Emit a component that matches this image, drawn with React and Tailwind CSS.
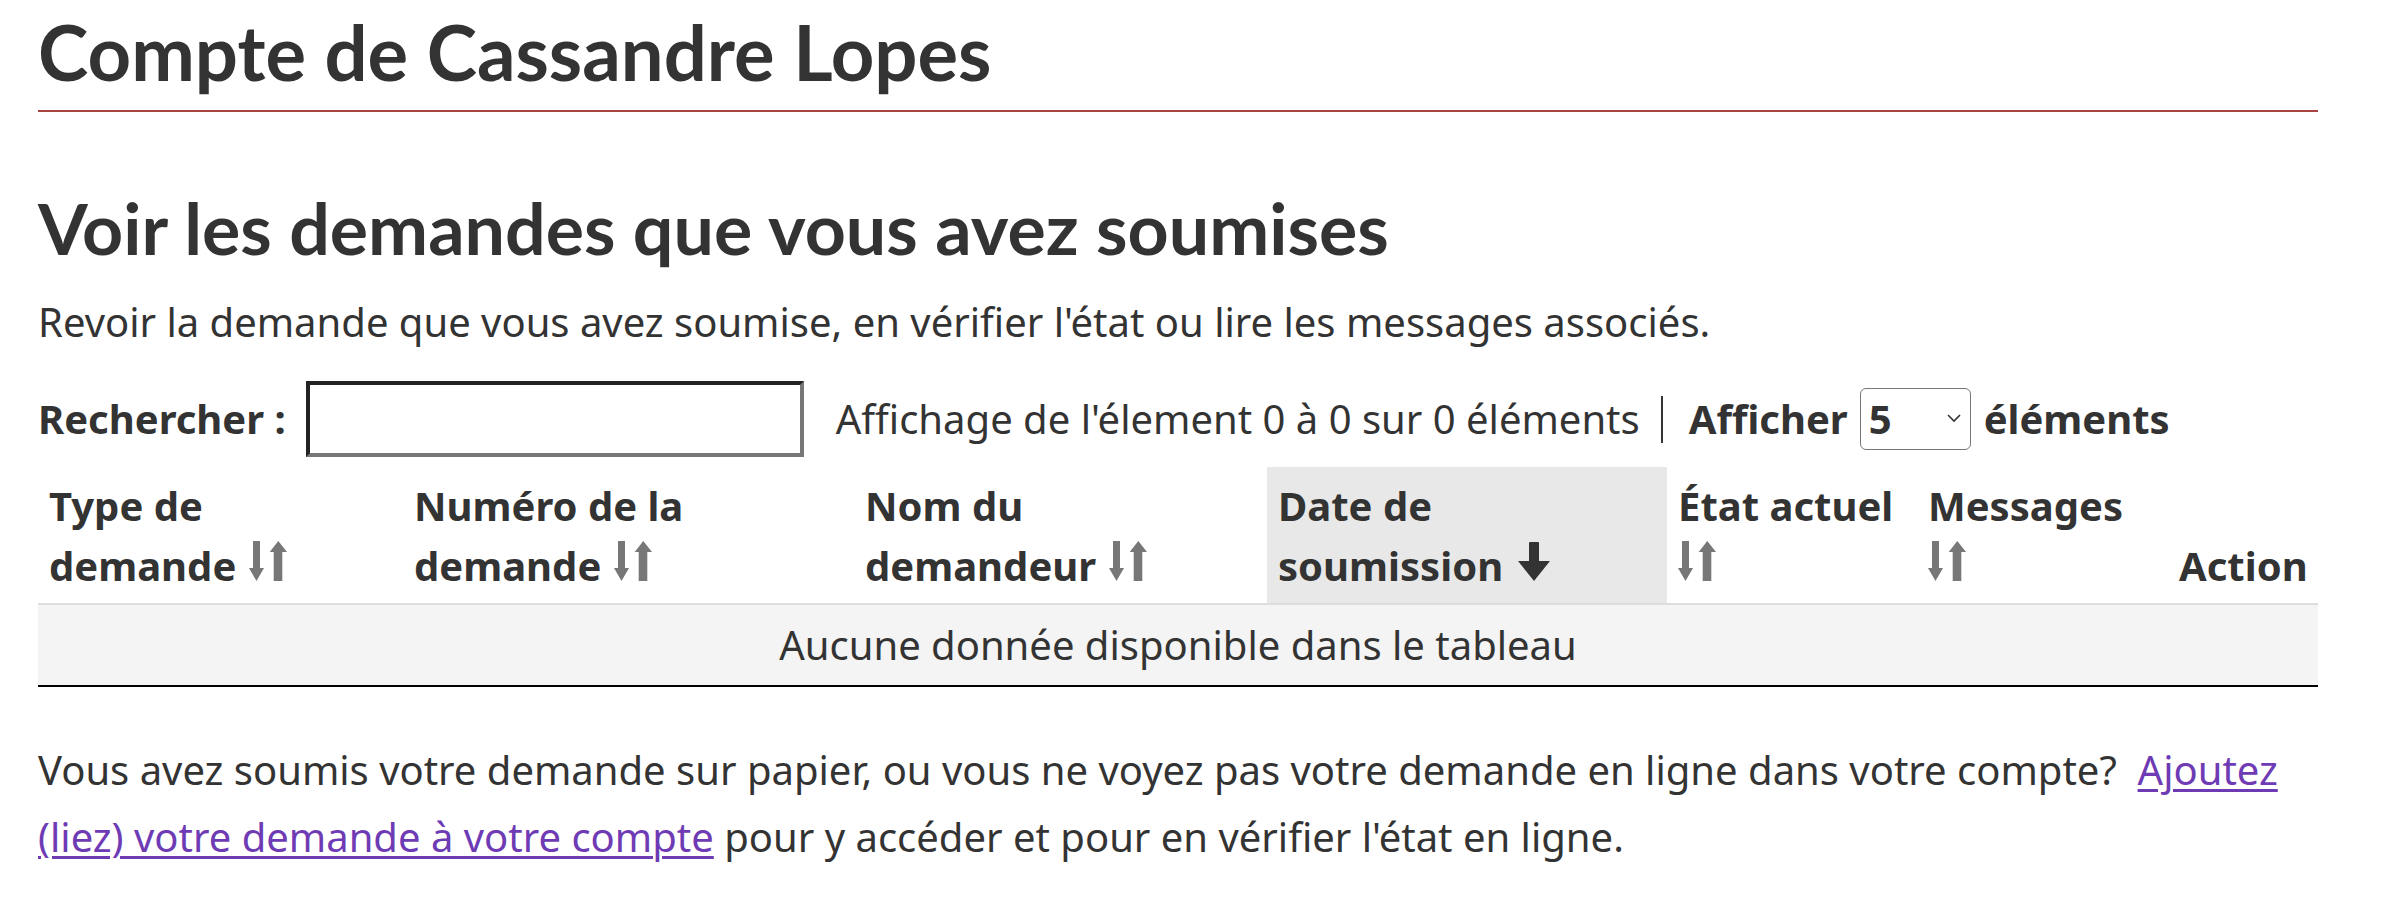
import React from 'react';

const SortIcon = () => (
  <svg className="inline-block ml-[13px] align-baseline" width="38" height="40" viewBox="0 0 38 40" fill="#777">
    <rect x="4" y="0" width="7" height="28" />
    <polygon points="0,27 15,27 7.5,40" />
    <rect x="24.7" y="10" width="8.6" height="30" />
    <polygon points="20.7,11 38,11 29.3,0" />
  </svg>
);

const SortDownIcon = () => (
  <svg className="inline-block ml-[15px] align-baseline" width="32" height="39" viewBox="0 0 32 39" fill="#333">
    <rect x="11" y="0" width="10" height="21" rx="1" />
    <polygon points="0,19 32,19 16,39" />
  </svg>
);

const columns = [
  { key: 'type', width: 'w-[365px]', line1: 'Type de', line2: 'demande', icon: 'sort' },
  { key: 'num', width: 'w-[451px]', line1: 'Numéro de la', line2: 'demande', icon: 'sort' },
  { key: 'nom', width: 'w-[413px]', line1: 'Nom du', line2: 'demandeur', icon: 'sort' },
  { key: 'date', width: 'w-[400px]', line1: 'Date de', line2: 'soumission', icon: 'down', active: true },
  { key: 'etat', width: 'w-[250px]', line1: 'État actuel', line2: '', icon: 'sort' },
  { key: 'msg', width: 'w-[251px]', line1: 'Messages', line2: '', icon: 'sort' },
  { key: 'action', width: 'w-[150px]', line1: '', line2: 'Action', icon: null },
];

const App = () => {
  return (
    <div className="bg-white text-[#333] min-h-[924px]" style={{ fontFamily: '"Noto Sans", sans-serif' }}>
      <div className="ml-[38px] w-[2280px] pt-[6px]">
        <h1 className="font-['Lato',sans-serif] font-bold text-[76px] leading-[1.2] pb-[13px] border-b-2 border-[#a94442]">
          Compte de Cassandre Lopes
        </h1>

        <h2 className="mt-[72px] font-['Lato',sans-serif] font-bold text-[71.7px] leading-[1.2]">
          Voir les demandes que vous avez soumises
        </h2>
        <p className="mt-[28px] text-[40px] leading-[48px]">
          Revoir la demande que vous avez soumise, en vérifier l'état ou lire les messages associés.
        </p>

        {/* barre de recherche / pagination */}
        <div className="mt-[35px] h-[76px] flex items-center text-[40px] leading-[60px]">
          <label className="font-bold">Rechercher :</label>
          <input
            type="text"
            className="ml-[20px] w-[498px] h-[76px] bg-white border-[4px] border-t-[#222] border-l-[#222] border-b-[#777] border-r-[#777] outline-none"
          />
          <span className="ml-[32px]">Affichage de l'élement 0 à 0 sur 0 éléments</span>
          <span className="ml-[21px] w-[2px] h-[47px] bg-[#333]"></span>
          <span className="ml-[26px] font-bold">Afficher</span>
          <div className="relative ml-[12px] w-[111px] h-[62px]">
            <select className="appearance-none w-full h-full border border-[#767676] rounded-[6px] bg-white pl-[8px] text-[40px] font-bold leading-[58px] outline-none">
              <option>5</option>
              <option>10</option>
              <option>25</option>
            </select>
            <svg className="absolute right-[10px] top-[26px] pointer-events-none" width="14" height="9" viewBox="0 0 14 9" fill="none" stroke="#333" strokeWidth="1.6">
              <path d="M1 1l6 6 6-6" />
            </svg>
          </div>
          <span className="ml-[13px] font-bold">éléments</span>
        </div>

        <table className="mt-[10px] w-[2280px] table-fixed border-collapse text-[40px] leading-[60px]">
          <thead>
            <tr className="border-b-2 border-black">
              {columns.map((col) => (
                <th
                  key={col.key}
                  className={`${col.width} ${col.active ? 'bg-[#e8e8e8]' : ''} text-left align-bottom font-bold px-[11px] pt-[9px] pb-[7px]`}
                >
                  {col.line1 && <div>{col.line1}</div>}
                  <div className="h-[60px] whitespace-nowrap">
                    {col.line2}
                    {col.icon === 'sort' && (col.line2 ? <SortIcon /> : <span className="-ml-[13px]"><SortIcon /></span>)}
                    {col.icon === 'down' && <SortDownIcon />}
                  </div>
                </th>
              ))}
            </tr>
          </thead>
          <tbody>
            <tr>
              <td colSpan={7} className="bg-[#f4f4f4] border-t-2 border-t-[#dddddd] border-b-2 border-b-black text-center pt-[10px] pb-[10px]">
                Aucune donnée disponible dans le tableau
              </td>
            </tr>
          </tbody>
        </table>

        <p className="mt-[49px] text-[40px] leading-[67px]">
          Vous avez soumis votre demande sur papier, ou vous ne voyez pas votre demande en ligne dans votre compte?{'\u00a0'}{' '}
          <a href="#" className="text-[#6e3bb5] underline decoration-[3px] underline-offset-[4px]">
            Ajoutez (liez) votre demande à votre compte
          </a>{' '}
          pour y accéder et pour en vérifier l'état en ligne.
        </p>
      </div>
    </div>
  );
};

export default App;
